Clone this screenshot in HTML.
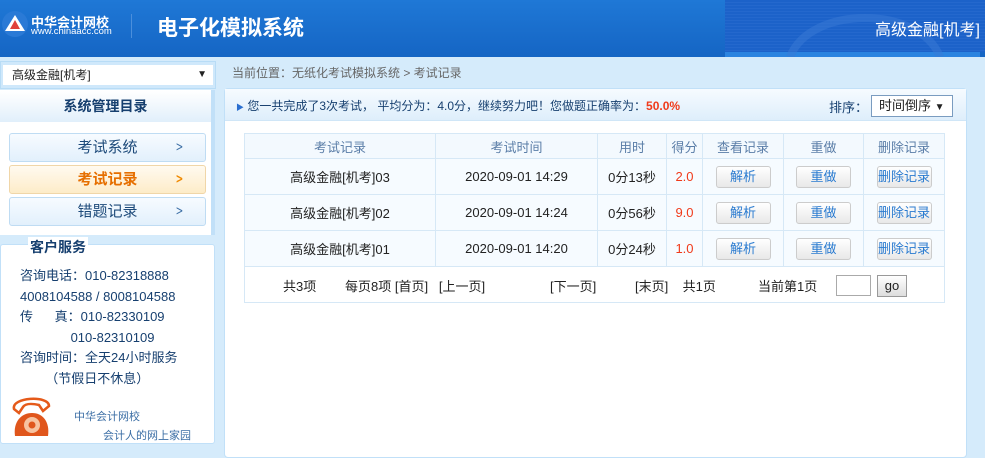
<!DOCTYPE html>
<html><head><meta charset="utf-8"><style>
*{margin:0;padding:0;box-sizing:border-box}
body{width:985px;height:454px;overflow:hidden;background:#d5ebfb;font-family:"Liberation Sans","Noto Sans CJK SC",sans-serif;font-size:13px;color:#222;position:relative}
.abs{position:absolute}
#hd{left:0;top:0;width:985px;height:57px;background:linear-gradient(180deg,#1f78d6,#1565c4)}
#hdr{left:725px;top:0;width:260px;height:52px;background:repeating-linear-gradient(180deg,#1c62c9 0 2px,#2468cd 2px 3px)}
#hdb{left:725px;top:52px;width:255px;height:5px;background:#2b84e0}
.btn{position:absolute;left:9px;width:197px;height:29px;border:1px solid #bfdcf3;border-radius:3px;background:linear-gradient(#f7fbff,#e2f0fc);font-size:15px;color:#1d4a7a;text-align:center;line-height:27px}
.btn span{position:absolute;right:20px;top:0;font-family:"DejaVu Sans";font-size:13px;color:#3b6ea5;transform:scaleX(.7)}
table{border-collapse:collapse;position:absolute;left:244px;top:133px;width:701px}
td{border:1px solid #d6e8f6;text-align:center;font-size:13px;height:36px}
tr.h td{height:25px;color:#5b7ea8;background:#f3f9fe}
tr.r td{background:#f6fbff}
.b{display:inline-block;width:55px;height:22px;line-height:20px;border:1px solid #ccc;border-radius:3px;background:linear-gradient(#fff,#e8e8e8);color:#2a7bd0;font-size:13px}
.cs{font-size:13px;color:#163f6f;line-height:20.5px}
</style></head><body>
<div id="hd" class="abs"></div>
<div id="hdr" class="abs"></div>
<div id="hdb" class="abs"></div>
<svg class="abs" style="left:780px;top:5px" width="170" height="52"><path d="M10 52 C30 0 140 0 160 52" fill="none" stroke="#3a7ad6" stroke-width="8" opacity=".5"/></svg>
<svg class="abs" style="left:1px;top:10px" width="28" height="28"><circle cx="14" cy="14" r="13" fill="#2a7ad6"/><path d="M4 21 L14 5 L24 21 Z" fill="#fff"/><path d="M9 19 L14 10 L19 19Z" fill="#e0403a"/></svg>
<div class="abs" style="left:31px;top:12px;color:#fff;font-size:13px;font-weight:bold">中华会计网校</div>
<div class="abs" style="left:31px;top:26px;color:#fff;font-size:9.5px">www.chinaacc.com</div>
<div class="abs" style="left:131px;top:14px;width:1px;height:24px;background:#4b8fdc"></div>
<div class="abs" style="left:157px;top:12px;color:#fff;font-size:21px;font-weight:bold">电子化模拟系统</div>
<div class="abs" style="left:875px;top:16px;color:#fff;font-size:16px">高级金融[机考]</div>

<div class="abs" style="left:0;top:61px;width:216px;height:28px;border:1px solid #b8dcf6;background:#cfe8fb"></div>
<div class="abs" style="left:3px;top:65px;width:210px;height:20px;background:#fff;font-size:12px;line-height:20px;padding-left:9px">高级金融[机考]<span style="position:absolute;right:6px;font-size:10px">▼</span></div>
<div class="abs" style="left:0;top:90px;width:215px;height:145px;background:#fff;border-right:4px solid #c1e0f8"></div>
<div class="abs" style="left:0;top:91px;width:211px;height:31px;background:linear-gradient(#fff,#e1effb);text-align:center;line-height:31px;font-weight:bold;font-size:14px;color:#163f6f">系统管理目录</div>
<div class="btn" style="top:133px">考试系统<span>&gt;</span></div>
<div class="btn" style="top:165px;background:linear-gradient(#fffaf0,#fdecc8);border-color:#f0d6a8;color:#e66f00;font-weight:bold">考试记录<span style="color:#f08a00">&gt;</span></div>
<div class="btn" style="top:197px">错题记录<span>&gt;</span></div>
<div class="abs" style="left:0;top:244px;width:215px;height:200px;background:#fff;border:1px solid #c1e0f8;border-radius:3px"></div>
<div class="abs" style="left:28px;top:237px;font-weight:bold;font-size:14px;color:#163f6f;background:#fff;padding:0 2px">客户服务</div>
<div class="abs cs" style="left:20px;top:266px">咨询电话：010-82318888<br>4008104588 / 8008104588<br>传&nbsp;&nbsp;&nbsp;&nbsp;&nbsp;&nbsp;真：010-82330109<br>&nbsp;&nbsp;&nbsp;&nbsp;&nbsp;&nbsp;&nbsp;&nbsp;&nbsp;&nbsp;&nbsp;&nbsp;&nbsp;&nbsp;010-82310109<br>咨询时间：全天24小时服务<br>&nbsp;&nbsp;&nbsp;&nbsp;&nbsp;&nbsp;&nbsp;（节假日不休息）</div>
<svg class="abs" style="left:9px;top:394px" width="46" height="46"><path d="M5 15 C2 3 40 1 40 12 L34 17 L30 11 C21 9 16 10 14 13 L10 19Z" fill="#fff" stroke="#e55a1a" stroke-width="2.5"/><path d="M6 42 C4 28 12 19 23 19 C34 19 41 28 39 42Z" fill="#e0561c"/><circle cx="23" cy="31" r="8" fill="#f7c3a0"/><circle cx="23" cy="31" r="3.5" fill="#e0561c"/></svg>
<div class="abs" style="left:74px;top:408px;font-size:11px;color:#3b6ea5">中华会计网校</div>
<div class="abs" style="left:103px;top:427px;font-size:11px;color:#3b6ea5">会计人的网上家园</div>

<div class="abs" style="left:232px;top:64px;font-size:12px;color:#666">当前位置：无纸化考试模拟系统 &gt; 考试记录</div>
<div class="abs" style="left:224px;top:88px;width:743px;height:370px;background:#fff;border:1px solid #c1e0f8;border-radius:4px"></div>
<div class="abs" style="left:225px;top:89px;width:741px;height:32px;background:linear-gradient(#f6fbff,#deeefb);border-bottom:1px solid #d0e6f7"></div>
<div class="abs" style="left:236px;top:97px;font-size:12px;color:#163f6f"><span style="font-size:8px;color:#2a6fd0">▶</span> 您一共完成了3次考试， 平均分为：4.0分，继续努力吧！您做题正确率为：<b style="color:#f03a1a">50.0%</b></div>
<div class="abs" style="left:829px;top:97px;font-size:13px;color:#163f6f">排序：</div>
<div class="abs" style="left:871px;top:95px;width:82px;height:22px;border:1px solid #7a9cc0;background:#fff;font-size:13px;line-height:20px;padding-left:7px">时间倒序 <span style="font-size:10px">▼</span></div>

<table>
<tr class="h"><td style="width:191px">考试记录</td><td style="width:162px">考试时间</td><td style="width:69px">用时</td><td style="width:36px">得分</td><td style="width:81px">查看记录</td><td style="width:80px">重做</td><td>删除记录</td></tr>
<tr class="r"><td>高级金融[机考]03</td><td>2020-09-01 14:29</td><td>0分13秒</td><td style="color:#f03a1a">2.0</td><td><span class="b">解析</span></td><td><span class="b">重做</span></td><td><span class="b">删除记录</span></td></tr>
<tr class="r"><td>高级金融[机考]02</td><td>2020-09-01 14:24</td><td>0分56秒</td><td style="color:#f03a1a">9.0</td><td><span class="b">解析</span></td><td><span class="b">重做</span></td><td><span class="b">删除记录</span></td></tr>
<tr class="r"><td>高级金融[机考]01</td><td>2020-09-01 14:20</td><td>0分24秒</td><td style="color:#f03a1a">1.0</td><td><span class="b">解析</span></td><td><span class="b">重做</span></td><td><span class="b">删除记录</span></td></tr>
<tr><td colspan="7" style="background:#fff"></td></tr>
</table>
<div class="abs" style="top:276px;left:283px;font-size:13px">共3项</div>
<div class="abs" style="top:276px;left:345px;font-size:13px">每页8项 [首页]&nbsp;&nbsp;&nbsp;[上一页]</div>
<div class="abs" style="top:276px;left:550px;font-size:13px">[下一页]</div>
<div class="abs" style="top:276px;left:635px;font-size:13px">[末页]&nbsp;&nbsp;&nbsp;&nbsp;共1页</div>
<div class="abs" style="top:276px;left:758px;font-size:13px">当前第1页</div>
<div class="abs" style="top:275px;left:836px;width:35px;height:21px;border:1px solid #aaa;background:#fff"></div>
<div class="abs" style="top:275px;left:877px;width:30px;height:22px;border:1px solid #999;background:linear-gradient(#fff,#ddd);text-align:center;line-height:20px;font-size:13px">go</div>
</body></html>
